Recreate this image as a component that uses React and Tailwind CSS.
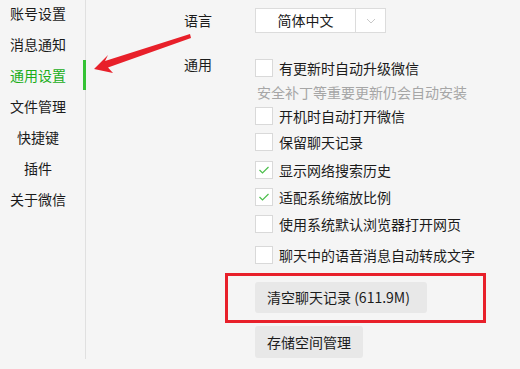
import React from 'react';

const menu = ['账号设置', '消息通知', '通用设置', '文件管理', '快捷键', '插件', '关于微信'];

const Checkbox = ({ checked }) => (
  <span className="w-[18px] h-[18px] border border-[#d9d9d9] bg-white flex items-center justify-center shrink-0">
    {checked && (
      <svg width="12" height="10" viewBox="0 0 12 10">
        <path d="M1.5 5 L4.5 8 L10.5 2" fill="none" stroke="#4cbf4c" strokeWidth="1.2" />
      </svg>
    )}
  </span>
);

const Row = ({ label, checked, className }) => (
  <div className={`h-[24px] flex items-center gap-[6px] ${className}`}>
    <Checkbox checked={checked} />
    <span>{label}</span>
  </div>
);

const App = () => {
  return (
    <div
      className="relative w-[520px] h-[369px] bg-[#f5f5f5] flex text-[14px] text-[#1b1b1b] overflow-hidden"
      style={{ fontFamily: '"Noto Sans CJK SC", "Noto Sans", sans-serif' }}
    >
      {/* sidebar */}
      <div className="w-[86px] pt-2 shrink-0">
        <div className="h-full border-r border-[#e0e0e0]">
          <div className="-mt-[10px] flex flex-col">
            {menu.map((m, i) => (
              <div
                key={m}
                className={`relative h-[31px] w-[85px] flex items-center ${i === 2 ? 'text-[#1aad19]' : ''}`}
              >
                <span className="w-[76px] text-center">{m}</span>
                {i === 2 && <span className="absolute right-[-1px] top-0 w-[3px] h-[30px] bg-[#35c335]" />}
              </div>
            ))}
          </div>
        </div>
      </div>

      {/* content */}
      <div className="flex pl-[98px]">
        <div className="w-[71px] shrink-0 flex flex-col">
          <div className="mt-2 h-[25px] flex items-center">语言</div>
          <div className="mt-[19px] h-[24px] flex items-center">通用</div>
        </div>
        <div className="flex flex-col">
          <div className="mt-2 h-[25px] w-[131px] flex border border-[#dcdcdc] bg-white">
            <div className="flex-1 flex items-center justify-center border-r border-[#dcdcdc]">简体中文</div>
            <div className="w-[29px] flex items-center justify-center">
              <svg width="10" height="6" viewBox="0 0 10 6">
                <path d="M1 1 L5 5 L9 1" fill="none" stroke="#c8c8c8" strokeWidth="1" />
              </svg>
            </div>
          </div>
          <Row className="mt-[23px]" label="有更新时自动升级微信" />
          <div className="h-[24px] flex items-center pl-[2px] text-[#a6a6a6]">安全补丁等重要更新仍会自动安装</div>
          <Row label="开机时自动打开微信" />
          <Row className="mt-[2px]" label="保留聊天记录" />
          <Row className="mt-[4px]" label="显示网络搜索历史" checked />
          <Row className="mt-[3px]" label="适配系统缩放比例" checked />
          <Row className="mt-[3px]" label="使用系统默认浏览器打开网页" />
          <Row className="mt-[7px]" label="聊天中的语音消息自动转成文字" />
          <button className="mt-[15px] h-[31px] w-[172px] bg-[#e8e8e8] rounded-[3px] text-left pl-3">
            清空聊天记录 (611.9M)
          </button>
          <button className="mt-[13px] h-[32px] w-[108px] bg-[#e8e8e8] rounded-[3px] text-left pl-3">
            存储空间管理
          </button>
        </div>
      </div>

      {/* annotations */}
      <div className="absolute left-[225px] top-[273px] w-[261px] h-[50px] border-[3px] border-[#e8202a]" />
      <svg className="absolute left-0 top-0" width="520" height="369" viewBox="0 0 520 369">
        <polygon
          points="94,69 113,73 108,67.5 191,38 190,34 105,61 108,55"
          fill="#e8202a"
        />
      </svg>
    </div>
  );
};

export default App;
